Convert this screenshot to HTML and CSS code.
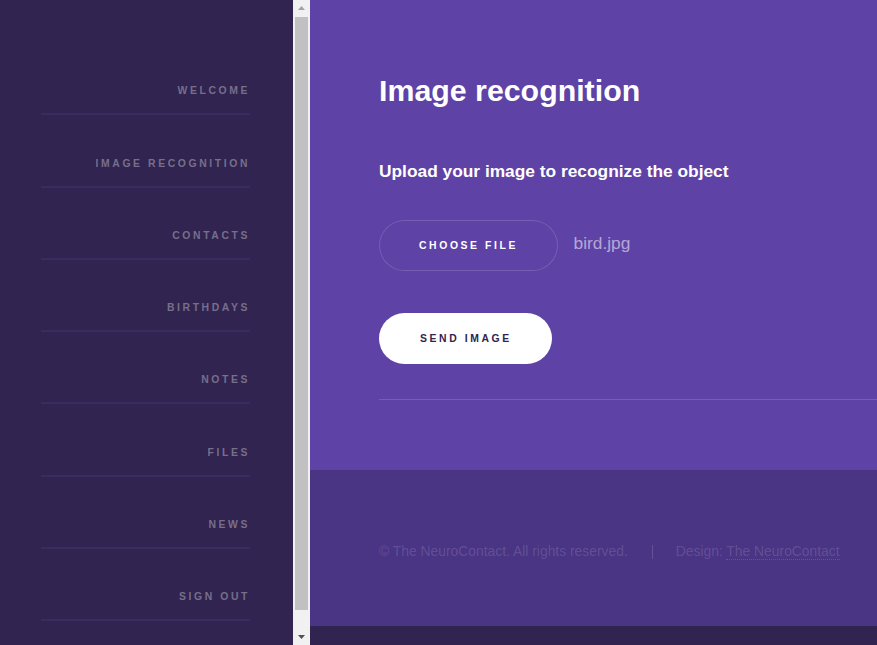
FILE: index.html
```html
<!DOCTYPE html>
<html lang="en">
<head>
<meta charset="utf-8">
<title>Image recognition</title>
<link rel="stylesheet" href="styles.css">
</head>
<body>
<div class="layout">
  <aside class="sidebar">
    <div class="sidebar-panel">
      <nav class="nav">
        <ul class="nav-list">
          <li class="nav-item"><a class="nav-link" href="#">Welcome</a></li>
          <li class="nav-item"><a class="nav-link" href="#">Image recognition</a></li>
          <li class="nav-item"><a class="nav-link" href="#">Contacts</a></li>
          <li class="nav-item"><a class="nav-link" href="#">Birthdays</a></li>
          <li class="nav-item"><a class="nav-link" href="#">Notes</a></li>
          <li class="nav-item"><a class="nav-link" href="#">Files</a></li>
          <li class="nav-item"><a class="nav-link" href="#">News</a></li>
          <li class="nav-item"><a class="nav-link" href="#">Sign out</a></li>
        </ul>
      </nav>
    </div>
    <div class="scrollbar" aria-hidden="true">
      <div class="sb-btn">
        <svg class="sb-arrow" width="17" height="17" viewBox="0 0 17 17"><polygon points="5,10 12,10 8.5,6" fill="#a3a3a3"/></svg>
      </div>
      <div class="sb-track"><div class="sb-thumb"></div></div>
      <div class="sb-btn">
        <svg class="sb-arrow" width="17" height="17" viewBox="0 0 17 17"><polygon points="5,7 12,7 8.5,11" fill="#505050"/></svg>
      </div>
    </div>
  </aside>
  <div class="main">
    <section class="intro">
      <h1 class="title">Image recognition</h1>
      <p class="lead">Upload your image to recognize the object</p>
      <div class="file-row">
        <label class="btn btn-outline">Choose file</label>
        <span class="file-name">bird.jpg</span>
      </div>
      <button class="btn btn-primary" type="button">Send image</button>
      <hr class="rule">
    </section>
    <footer class="footer">
      <ul class="menu">
        <li class="menu-item">© The NeuroContact. All rights reserved.</li>
        <li class="menu-item menu-sep">Design: <a class="menu-link" href="#">The NeuroContact</a></li>
      </ul>
    </footer>
  </div>
</div>
</body>
</html>
```
FILE: styles.css
```css
* { box-sizing: border-box; }

html, body {
  margin: 0;
  padding: 0;
  height: 100%;
}

body {
  background: #312450;
  font-family: "Liberation Sans", Arial, sans-serif;
  font-size: 17.33px;
  color: #fff;
  overflow: hidden;
}

.layout {
  display: flex;
  height: 645px;
}

/* Sidebar */
.sidebar {
  width: 310px;
  flex: 0 0 310px;
  height: 645px;
  display: flex;
}

.sidebar-panel {
  flex: 1 1 auto;
  height: 100%;
  overflow: hidden;
  background: #312450;
}

.scrollbar {
  flex: 0 0 17px;
  width: 17px;
  display: flex;
  flex-direction: column;
  background: #f1f1f1;
}

.sb-btn {
  height: 17px;
  flex: 0 0 17px;
}

.sb-arrow {
  display: block;
}

.sb-track {
  flex: 1 1 auto;
  padding: 0 2px;
}

.sb-thumb {
  height: 593px;
  background: #c1c1c1;
}

.nav {
  padding: 43px 43px 44px 41px;
}

.nav-list {
  list-style: none;
  margin: 0;
  padding: 0;
}

.nav-item {
  padding-top: 40.3px;
}

.nav-link {
  display: block;
  text-align: right;
  text-decoration: none;
  text-transform: uppercase;
  font-weight: bold;
  font-size: 10.4px;
  letter-spacing: 2.6px;
  line-height: 15px;
  color: rgba(255, 255, 255, 0.35);
  padding-bottom: 15px;
  border-bottom: 2px solid #3b2b61;
}

/* Main */
.main {
  flex: 1 1 auto;
  min-width: 0;
  display: flex;
  flex-direction: column;
}

.intro {
  background: #5e42a6;
  height: 470px;
  padding: 68.25px 0 0 69px;
}

.title {
  margin: 0;
  font-size: 30.33px;
  line-height: 45.5px;
  font-weight: bold;
  color: #fff;
}

.lead {
  margin: 42.95px 0 0;
  font-size: 17.33px;
  line-height: 28.6px;
  font-weight: bold;
  color: #fff;
}

.file-row {
  display: flex;
  align-items: flex-start;
  margin-top: 34.7px;
}

.btn {
  display: inline-flex;
  align-items: center;
  justify-content: center;
  height: 51px;
  border: 0;
  border-radius: 25.5px;
  font-family: "Liberation Sans", Arial, sans-serif;
  font-weight: bold;
  font-size: 10.4px;
  letter-spacing: 2.6px;
  text-transform: uppercase;
  cursor: pointer;
}

.btn-outline {
  padding: 0 39.5px 0 40px;
  color: #fff;
  background: transparent;
  box-shadow: inset 0 0 0 1px rgba(255, 255, 255, 0.15);
}

.btn-primary {
  margin-top: 42.3px;
  padding: 0 40px 0 41px;
  background: #fff;
  color: #312450;
}

.file-name {
  margin: 9.4px 0 0 16px;
  font-size: 17.33px;
  line-height: 28.6px;
  color: rgba(255, 255, 255, 0.55);
}

.rule {
  margin: 34.5px 0 0;
  border: 0;
  border-top: 1px solid rgba(255, 255, 255, 0.15);
  height: 0;
}

/* Footer */
.footer {
  background: #4a3484;
  height: 156px;
  padding: 75.25px 0 0 69px;
}

.menu {
  list-style: none;
  margin: 0;
  padding: 0;
  display: flex;
}

.menu-item {
  font-size: 13.87px;
  line-height: 13.87px;
  color: rgba(255, 255, 255, 0.15);
}

.menu-sep {
  margin-left: 24.5px;
  padding-left: 22.5px;
  border-left: 1px solid rgba(255, 255, 255, 0.15);
}

.menu-link {
  color: rgba(255, 255, 255, 0.15);
  text-decoration: none;
  border-bottom: 1px dotted rgba(255, 255, 255, 0.15);
}
```
